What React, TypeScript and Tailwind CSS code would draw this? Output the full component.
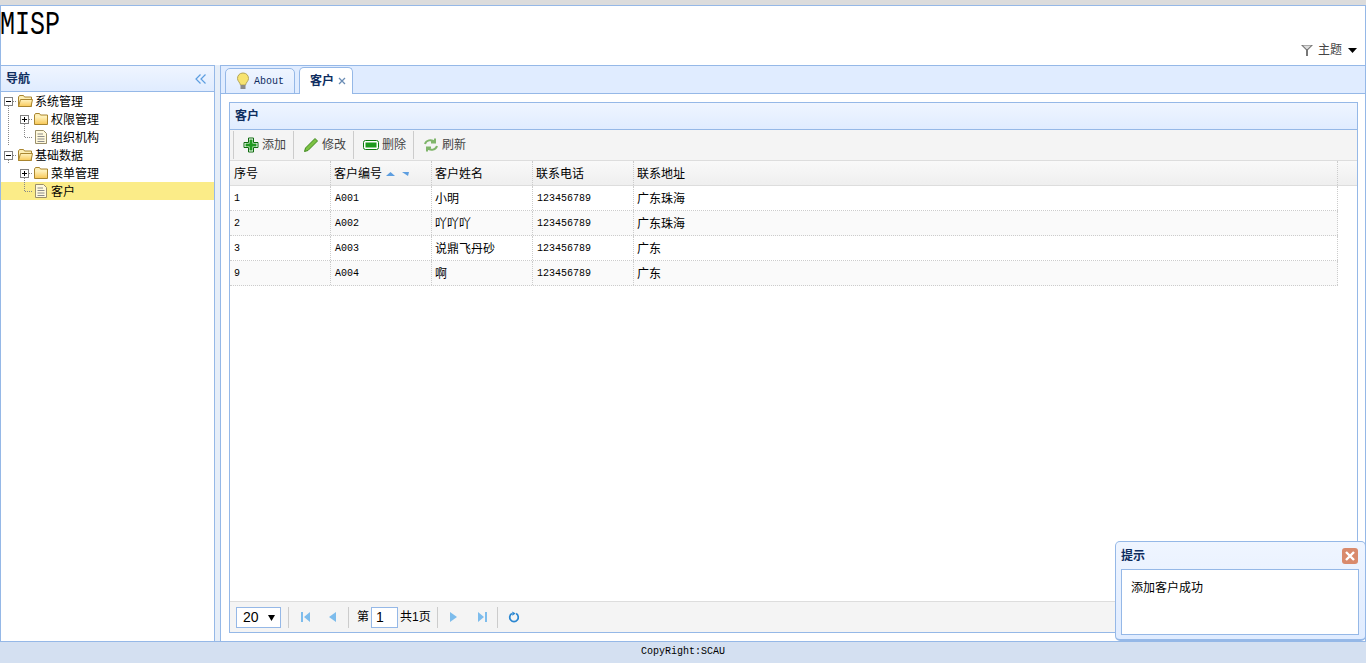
import React from "react";

const cjk = `font-['Liberation_Sans','Noto_Sans_CJK_SC',sans-serif]`;

const customers = [
    { no: "1", code: "A001", name: "小明", phone: "123456789", addr: "广东珠海" },
    { no: "2", code: "A002", name: "吖吖吖", phone: "123456789", addr: "广东珠海" },
    { no: "3", code: "A003", name: "说鼎飞丹砂", phone: "123456789", addr: "广东" },
    { no: "9", code: "A004", name: "啊", phone: "123456789", addr: "广东" },
];

function Folder({ open }: { open?: boolean }) {
    return (
        <svg width="16" height="16" viewBox="0 0 16 16" className="shrink-0">
            <defs>
                <linearGradient id="gold" x1="0" y1="0" x2="0" y2="1">
                    <stop offset="0" stopColor="#fff3c0" />
                    <stop offset="1" stopColor="#f8c95a" />
                </linearGradient>
            </defs>
            <path d="M1.5 4 L2.5 2.5 H6.5 L7.5 4 H14.5 V13.5 H1.5 Z" fill="#fdeeb5" stroke="#a9852f" strokeLinejoin="round" />
            {open ? (
                <path d="M1.5 13.5 L3.5 6.5 H15.5 L14 13.5 Z" fill="url(#gold)" stroke="#a9852f" strokeLinejoin="round" />
            ) : (
                <path d="M2 5.5 H14 V13 H2 Z" fill="url(#gold)" />
            )}
        </svg>
    );
}

function FileIcon() {
    return (
        <svg width="16" height="16" viewBox="0 0 16 16" className="shrink-0">
            <path d="M2.5 1.5 H10.5 L13.5 4.5 V14.5 H2.5 Z" fill="#fff9dc" stroke="#9a8f6a" />
            <path d="M4.5 5 H10 M4.5 7.5 H11.5 M4.5 10 H11.5 M4.5 12.5 H11.5" stroke="#8c8c8c" />
        </svg>
    );
}

// dotted connector plus the +/- box of a tree row
function Guide({ kind }: { kind: "minus" | "plus" | "elbow" | "line" | "none" }) {
    return (
        <svg width="16" height="18" viewBox="0 0 16 18" className="shrink-0">
            {kind === "line" && <path d="M7.5 0 V18" stroke="#888" strokeDasharray="1 1" />}
            {kind === "elbow" && <path d="M7.5 0 V9.5 H16" stroke="#888" strokeDasharray="1 1" fill="none" />}
            {(kind === "minus" || kind === "plus") && (
                <>
                    <path d="M12 9.5 H16" stroke="#888" strokeDasharray="1 1" />
                    <path d="M7.5 14 V18" stroke="#888" strokeDasharray="1 1" />
                    <rect x="3.5" y="5.5" width="8" height="8" fill="#fff" stroke="#808080" />
                    <path d="M5 9.5 H10" stroke="#000" />
                    {kind === "plus" && <path d="M7.5 7 V12" stroke="#000" />}
                </>
            )}
        </svg>
    );
}

function TreeRow({
    guides,
    icon,
    label,
    selected,
}: {
    guides: ("minus" | "plus" | "elbow" | "line" | "none")[];
    icon: React.ReactNode;
    label: string;
    selected?: boolean;
}) {
    return (
        <div className={`flex h-[18px] items-center text-xs text-black ${selected ? "bg-[#fbec88]" : ""}`}>
            {guides.map((g, i) => (
                <Guide key={i} kind={g} />
            ))}
            {icon}
            <span className="ml-[2px] pt-[1px] leading-[18px]">{label}</span>
        </div>
    );
}

function ToolSep() {
    return <div className="h-[28px] w-px bg-[#ccc]" />;
}

function ToolButton({ icon, label }: { icon: React.ReactNode; label: string }) {
    return (
        <div className="flex w-[59px] items-center pl-[9px] text-xs text-[#444]">
            {icon}
            <span className="ml-[3px]">{label}</span>
        </div>
    );
}

function PagerIcon({ d }: { d: string }) {
    return (
        <svg width="16" height="16" viewBox="0 0 16 16" className="shrink-0">
            <path d={d} fill="#7dbcec" />
        </svg>
    );
}

const gridCols = "grid grid-cols-[101px_101px_101px_101px_704px]";
const monoText = "font-['Liberation_Mono'] text-[10px]";

export default function App() {
    return (
        <div className={`flex h-[663px] w-[1366px] flex-col overflow-hidden bg-white ${cjk}`}>
            <div className="h-[5px] bg-[#dcdcdc]" />

            {/* top banner */}
            <div className="flex h-[60px] flex-col border-x border-t border-[#95b8e7]">
                <div className="h-[36px] -ml-px pt-[1px]">
                    <span className="inline-block origin-top-left scale-y-[1.3] font-['Liberation_Mono'] text-[25px] leading-[30px] text-black">MISP</span>
                </div>
                <div className="flex items-center justify-end pr-[8px] text-xs text-[#444]">
                    <svg width="14" height="14" viewBox="0 0 14 14" className="mr-[4px]">
                        <path d="M1 2 H13 L8 7 V13 H6 V7 Z" fill="#777" />
                        <path d="M3 2.5 H11 L7.5 6 H6.5 Z" fill="#ddd" />
                    </svg>
                    <span>主题</span>
                    <svg width="9" height="5" viewBox="0 0 9 5" className="ml-[6px]">
                        <path d="M0 0 H9 L4.5 5 Z" fill="#000" />
                    </svg>
                </div>
            </div>

            <div className="flex min-h-0 flex-1">
                {/* west nav */}
                <div className="flex w-[215px] flex-col border border-b-0 border-[#95b8e7]">
                    <div className="flex h-[26px] items-center justify-between border-b border-[#95b8e7] bg-gradient-to-b from-[#eff5ff] to-[#e0ecff] pl-[5px] pr-[7px]">
                        <span className="text-xs font-bold text-[#0e2d5f]">导航</span>
                        <svg width="12" height="12" viewBox="0 0 12 12" fill="none" stroke="#5d9ee0" strokeWidth="1.2">
                            <path d="M5.5 1.5 L1 6 L5.5 10.5 M10.5 1.5 L6 6 L10.5 10.5" />
                        </svg>
                    </div>
                    <div className="flex-1">
                        <TreeRow guides={["minus"]} icon={<Folder open />} label="系统管理" />
                        <TreeRow guides={["line", "plus"]} icon={<Folder />} label="权限管理" />
                        <TreeRow guides={["line", "elbow"]} icon={<FileIcon />} label="组织机构" />
                        <TreeRow guides={["minus"]} icon={<Folder open />} label="基础数据" />
                        <TreeRow guides={["none", "plus"]} icon={<Folder />} label="菜单管理" />
                        <TreeRow guides={["none", "elbow"]} icon={<FileIcon />} label="客户" selected />
                    </div>
                </div>

                {/* splitter */}
                <div className="w-[5px] bg-[#e6eef8]" />

                {/* center */}
                <div className="flex min-w-0 flex-1 flex-col border-x border-[#95b8e7]">
                    <div className="flex h-[29px] items-end gap-[4px] border-y border-[#95b8e7] bg-[#e0ecff] pl-[4px]">
                        <div className="-mb-px flex h-[26px] w-[70px] items-center rounded-t-[5px] border border-[#95b8e7] bg-gradient-to-b from-[#eff5ff] to-[#e0ecff] pl-[9px]">
                            <svg width="16" height="18" viewBox="0 0 16 18">
                                <path d="M8 1 C11.5 1 13.5 3.5 13.5 6.5 C13.5 9 11 10.5 10.5 13 H5.5 C5 10.5 2.5 9 2.5 6.5 C2.5 3.5 4.5 1 8 1 Z" fill="#f7e36f" stroke="#b3a55a" />
                                <rect x="5.5" y="13" width="5" height="4" fill="#8a8a8a" />
                            </svg>
                            <span className={`ml-[3px] text-[#0e2d5f] ${monoText}`}>About</span>
                        </div>
                        <div className="-mb-px flex h-[27px] w-[54px] items-center rounded-t-[5px] border border-b-0 border-[#95b8e7] bg-white pl-[10px]">
                            <span className="text-xs font-bold text-[#0e2d5f]">客户</span>
                            <svg width="8" height="8" viewBox="0 0 8 8" className="ml-[4px]" stroke="#6b8db5" strokeWidth="1.3">
                                <path d="M1 1 L7 7 M7 1 L1 7" />
                            </svg>
                        </div>
                    </div>

                    <div className="flex min-h-0 flex-1 flex-col pb-[8px] pl-[8px] pr-[7px] pt-[8px]">
                        <div className="flex min-h-0 flex-1 flex-col border border-[#95b8e7]">
                            <div className="flex h-[27px] items-center border-b border-[#95b8e7] bg-gradient-to-b from-[#eff5ff] to-[#e0ecff] pl-[5px] text-xs font-bold text-[#0e2d5f]">
                                客户
                            </div>

                            {/* toolbar */}
                            <div className="flex h-[31px] items-center border-b border-[#ddd] bg-[#f4f4f4] pl-[3px]">
                                <ToolSep />
                                <ToolButton
                                    label="添加"
                                    icon={
                                        <svg width="16" height="16" viewBox="0 0 16 16">
                                            <path d="M5.5 1 H10.5 V5.5 H15 V10.5 H10.5 V15 H5.5 V10.5 H1 V5.5 H5.5 Z" fill="#fff" stroke="#0d6b0d" strokeLinejoin="round" />
                                            <path d="M6.5 2.5 H9.5 V6.5 H13.5 V9.5 H9.5 V13.5 H6.5 V9.5 H2.5 V6.5 H6.5 Z" fill="#1f9a1f" />
                                        </svg>
                                    }
                                />
                                <ToolSep />
                                <ToolButton
                                    label="修改"
                                    icon={
                                        <svg width="16" height="16" viewBox="0 0 16 16">
                                            <path d="M12 1.5 L14.5 4 L5 13.5 L1.5 14.5 L2.5 11 Z" fill="#7cc142" stroke="#3f8a1e" />
                                        </svg>
                                    }
                                />
                                <ToolSep />
                                <ToolButton
                                    label="删除"
                                    icon={
                                        <svg width="16" height="16" viewBox="0 0 16 16">
                                            <rect x="0.5" y="3.5" width="15" height="9" rx="2" fill="#fff" stroke="#0d7a0d" />
                                            <rect x="2.5" y="5.5" width="11" height="5" fill="#1d9a1d" />
                                        </svg>
                                    }
                                />
                                <ToolSep />
                                <ToolButton
                                    label="刷新"
                                    icon={
                                        <svg width="16" height="16" viewBox="0 0 16 16" fill="none" stroke="#7fb56a" strokeWidth="2">
                                            <path d="M2 7 C3 3.5 8 1.5 12 5 M12 1.5 V5.5 H8" />
                                            <path d="M14 9 C13 12.5 8 14.5 4 11 M4 14.5 V10.5 H8" />
                                        </svg>
                                    }
                                />
                            </div>

                            {/* grid header */}
                            <div className="flex h-[25px] border-b border-[#ddd] bg-gradient-to-b from-[#f9f9f9] to-[#efefef] text-xs text-black">
                                <div className={gridCols}>
                                    {["序号", "客户编号", "客户姓名", "联系电话", "联系地址"].map((title, i) => (
                                        <div key={title} className={`flex items-center border-r border-dotted border-[#ccc] pt-[1px] ${i === 0 ? "pl-[4px]" : "pl-[3px]"}`}>
                                            {title}
                                            {i === 1 && (
                                                <svg width="24" height="6" viewBox="0 0 24 6" className="ml-[4px]">
                                                    <path d="M0 5 L4.5 1 L9 5 Z" fill="#5d9ee0" />
                                                    <path d="M16 1 H23 L22 5 Z" fill="#5d9ee0" />
                                                </svg>
                                            )}
                                        </div>
                                    ))}
                                </div>
                                <div className="flex-1" />
                            </div>

                            {/* grid body */}
                            <div className="min-h-0 flex-1 bg-white">
                                {customers.map((c, i) => (
                                    <div key={c.code} className={`w-[1108px] ${gridCols} h-[25px] border-b border-dotted border-[#ccc] text-xs text-black ${i % 2 === 1 ? "bg-[#fafafa]" : ""}`}>
                                        <div className={`flex items-center border-r border-dotted border-[#ccc] pl-[4px] pt-[1px] ${monoText}`}>{c.no}</div>
                                        <div className={`flex items-center border-r border-dotted border-[#ccc] pl-[4px] pt-[1px] ${monoText}`}>{c.code}</div>
                                        <div className="flex items-center border-r border-dotted border-[#ccc] pl-[3px] pt-[1px]">{c.name}</div>
                                        <div className={`flex items-center border-r border-dotted border-[#ccc] pl-[4px] pt-[1px] ${monoText}`}>{c.phone}</div>
                                        <div className="flex items-center border-r border-dotted border-[#ccc] pl-[3px] pt-[1px]">{c.addr}</div>
                                    </div>
                                ))}
                            </div>

                            {/* pager */}
                            <div className="flex h-[31px] items-center border-t border-[#ddd] bg-[#f4f4f4] pl-[6px] text-xs text-black">
                                <div className="flex h-[21px] w-[45px] items-center justify-between border border-[#95b8e7] bg-white pl-[6px] pr-[5px] text-sm">
                                    <span>20</span>
                                    <svg width="7" height="7" viewBox="0 0 7 7">
                                        <path d="M0 1 H7 L3.5 7 Z" fill="#000" />
                                    </svg>
                                </div>
                                <div className="ml-[7px] h-[21px] w-px bg-[#ccc]" />
                                <div className="ml-[8px] flex w-[43px] justify-between">
                                    <PagerIcon d="M4 3 H6 V13 H4 Z M13 3 V13 L7 8 Z" />
                                    <PagerIcon d="M12 3 V13 L5 8 Z" />
                                </div>
                                <div className="ml-[8px] h-[21px] w-px bg-[#ccc]" />
                                <span className="ml-[8px]">第</span>
                                <div className="ml-[2px] flex h-[21px] w-[27px] items-center border border-[#95b8e7] bg-white pl-[4px] text-sm">1</div>
                                <span className="ml-[2px]">共1页</span>
                                <div className="ml-[6px] h-[21px] w-px bg-[#ccc]" />
                                <div className="ml-[8px] flex w-[45px] justify-between">
                                    <PagerIcon d="M4 3 V13 L11 8 Z" />
                                    <PagerIcon d="M3 3 V13 L9 8 Z M10 3 H12 V13 H10 Z" />
                                </div>
                                <div className="ml-[6px] h-[21px] w-px bg-[#ccc]" />
                                <svg width="12" height="14" viewBox="0 0 14 14" fill="none" className="ml-[10px]">
                                    <path d="M4.5 3 A5 5 0 1 0 9.5 3" stroke="#2b87d1" strokeWidth="2" />
                                    <path d="M5 0.5 L9 3 L5 5.5 Z" fill="#2b87d1" />
                                </svg>
                            </div>
                        </div>
                    </div>
                </div>
            </div>

            <div className={`flex h-[22px] items-center justify-center border-t border-[#95b8e7] bg-[#d4e0f1] pb-[3px] text-black ${monoText}`}>
                CopyRight:SCAU
            </div>

            {/* message popup */}
            <div className="absolute left-[1115px] top-[541px] flex h-[100px] w-[251px] flex-col rounded-[5px] border border-b-2 border-[#95b8e7] bg-gradient-to-b from-[#eff5ff] to-[#e0ecff] pb-[4px] pl-[5px] pr-[6px]">
                <div className="flex h-[27px] items-center justify-between pr-px">
                    <span className="text-xs font-bold text-[#0e2d5f]">提示</span>
                    <div className="flex h-[16px] w-[16px] items-center justify-center rounded-[3px] bg-[#d98a6c]">
                        <svg width="10" height="10" viewBox="0 0 10 10" stroke="#fff" strokeWidth="2.4">
                            <path d="M1 1 L9 9 M9 1 L1 9" />
                        </svg>
                    </div>
                </div>
                <div className="flex-1 border border-[#95b8e7] bg-white pl-[9px] pt-[9px] text-xs leading-[18px] text-black">添加客户成功</div>
            </div>
        </div>
    );
}
